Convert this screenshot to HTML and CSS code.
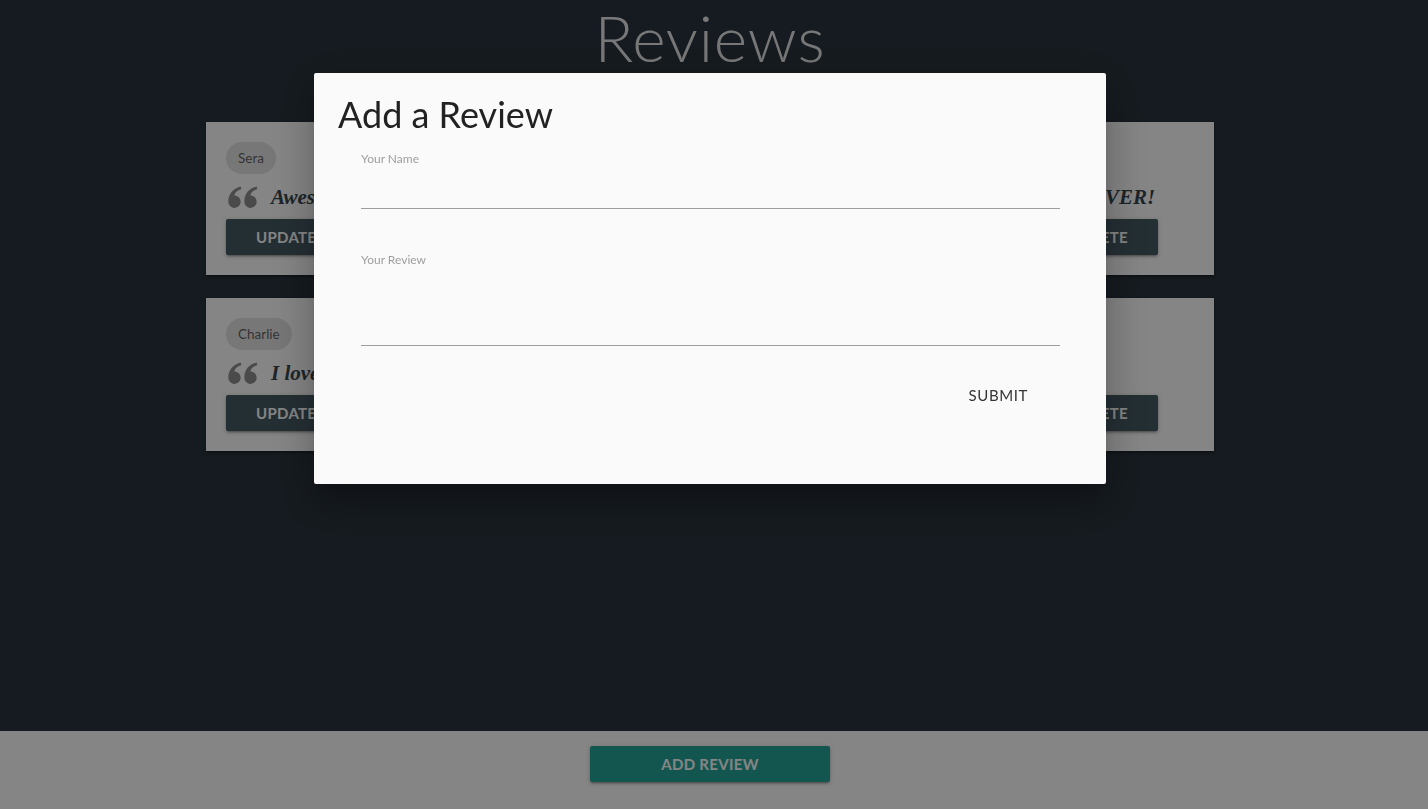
FILE: index.html
```html
<!DOCTYPE html>
<html lang="en">
<head>
<meta charset="utf-8">
<title>Reviews</title>
<link rel="stylesheet" href="styles.css">
</head>
<body>
<div class="page">
  <main class="main">
    <h1 class="page-title">Reviews</h1>
    <section class="reviews">
      <article class="card">
        <div class="chip">Sera</div>
        <p class="quote">
          <svg class="quote-icon" viewBox="0 0 30 22" width="30" height="22" aria-hidden="true">
            <path d="M6.5 9.5a6.2 6.2 0 1 1 0 12.4A6.2 6.2 0 0 1 0.3 15.6C0.3 8 5 2.6 12.6 0.4l0.8 2.6C8.6 4.8 6.4 7.2 6.5 9.5z"/>
            <path d="M22.5 9.5a6.2 6.2 0 1 1 0 12.4A6.2 6.2 0 0 1 16.3 15.6C16.3 8 21 2.6 28.6 0.4l0.8 2.6C24.6 4.8 22.4 7.2 22.5 9.5z"/>
          </svg>
          <span class="quote-text">Awesome food, very friendly staff and the cosiest little corner table in town. Best brunch place, EVER!</span>
        </p>
        <div class="actions">
          <button class="btn btn-dark" type="button">Update</button>
          <button class="btn btn-dark" type="button">Delete</button>
        </div>
      </article>
      <article class="card">
        <div class="chip">Charlie</div>
        <p class="quote">
          <svg class="quote-icon" viewBox="0 0 30 22" width="30" height="22" aria-hidden="true">
            <path d="M6.5 9.5a6.2 6.2 0 1 1 0 12.4A6.2 6.2 0 0 1 0.3 15.6C0.3 8 5 2.6 12.6 0.4l0.8 2.6C8.6 4.8 6.4 7.2 6.5 9.5z"/>
            <path d="M22.5 9.5a6.2 6.2 0 1 1 0 12.4A6.2 6.2 0 0 1 16.3 15.6C16.3 8 21 2.6 28.6 0.4l0.8 2.6C24.6 4.8 22.4 7.2 22.5 9.5z"/>
          </svg>
          <span class="quote-text">I love the atmosphere here, I come back every week.</span>
        </p>
        <div class="actions">
          <button class="btn btn-dark" type="button">Update</button>
          <button class="btn btn-dark" type="button">Delete</button>
        </div>
      </article>
    </section>
  </main>
  <footer class="footer">
    <button class="btn btn-teal" type="button">Add Review</button>
  </footer>
</div>

<div class="overlay"></div>

<div class="modal">
  <h4 class="modal-title">Add a Review</h4>
  <form class="form">
    <div class="field">
      <label class="field-label" for="name">Your Name</label>
      <input class="field-input" id="name" type="text">
    </div>
    <div class="field field-review">
      <label class="field-label" for="review">Your Review</label>
      <textarea class="field-input field-textarea" id="review"></textarea>
    </div>
    <div class="form-actions">
      <button class="btn-flat" type="button">Submit</button>
    </div>
  </form>
</div>
</body>
</html>
```

FILE: styles.css
```css
* {
  box-sizing: border-box;
}

html, body {
  margin: 0;
  padding: 0;
}

body {
  background: #2a343e;
  font-family: "Lato", "Open Sans", sans-serif;
  color: #333;
}

.page {
  min-height: 100vh;
  display: flex;
  flex-direction: column;
}

.main {
  flex: 1;
  display: flex;
  flex-direction: column;
  align-items: center;
  padding-right: 8px;
}

.page-title {
  margin: 0 0 46px;
  font-weight: 300;
  font-size: 64px;
  line-height: 76px;
  letter-spacing: .8px;
  color: #e6e6e6;
}

.reviews {
  width: 1008px;
  display: flex;
  flex-direction: column;
  gap: 23px;
}

.card {
  background: #fff;
  padding: 20px 56px 20px 20px;
  box-shadow: 0 2px 2px 0 rgba(0,0,0,.14), 0 3px 1px -2px rgba(0,0,0,.12), 0 1px 5px 0 rgba(0,0,0,.2);
}

.chip {
  display: inline-flex;
  align-items: center;
  height: 32px;
  padding: 0 12px;
  border-radius: 16px;
  background: #e4e4e4;
  color: rgba(0,0,0,.6);
  font-size: 13.5px;
}

.quote {
  margin: 12px 0 0;
  height: 22px;
  display: flex;
  align-items: center;
  gap: 13px;
  white-space: nowrap;
  overflow: hidden;
}

.quote-icon {
  flex: none;
  margin-left: 2px;
  fill: #8e8e8e;
}

.quote-text {
  font-family: "Liberation Serif", "DejaVu Serif", serif;
  font-style: italic;
  font-weight: bold;
  font-size: 21px;
  line-height: 22px;
  color: #37474f;
}

.actions {
  margin-top: 11px;
  display: flex;
  justify-content: space-between;
}

.btn {
  border: none;
  height: 36px;
  padding: 0 30px;
  font-family: "Lato", "Open Sans", sans-serif;
  font-size: 15px;
  font-weight: 700;
  letter-spacing: .3px;
  text-transform: uppercase;
  color: #fff;
  border-radius: 2px;
  box-shadow: 0 2px 2px 0 rgba(0,0,0,.14), 0 3px 1px -2px rgba(0,0,0,.12), 0 1px 5px 0 rgba(0,0,0,.2);
}

.btn-dark {
  background: #455a64;
}

.footer {
  height: 78px;
  background: #fff;
  display: flex;
  justify-content: center;
  padding: 15px 8px 0 0;
}

.btn-teal {
  width: 240px;
  background: #26a69a;
}

.overlay {
  position: fixed;
  inset: 0;
  background: rgba(0,0,0,.48);
}

.modal {
  position: fixed;
  top: 73px;
  left: 314px;
  width: 792px;
  height: 411px;
  background: #fafafa;
  padding: 21px 24px 24px;
  border-radius: 2px;
  box-shadow: 0 24px 38px 3px rgba(0,0,0,.14), 0 9px 46px 8px rgba(0,0,0,.12), 0 11px 15px -7px rgba(0,0,0,.2);
}

.modal-title {
  margin: 0;
  font-weight: 400;
  font-size: 36px;
  line-height: 40px;
  color: #222;
}

.form {
  padding: 0 22px 0 23px;
  margin-top: 17px;
}

.field {
  display: flex;
  flex-direction: column;
}

.field-review {
  margin-top: 43px;
}

.field-label {
  font-size: 12px;
  line-height: 16px;
  color: #9e9e9e;
}

.field-input {
  height: 42px;
  border: none;
  border-bottom: 1px solid #9e9e9e;
  background: transparent;
  font-family: inherit;
  font-size: 16px;
  outline: none;
}

.field-textarea {
  height: 78px;
  resize: none;
}

.form-actions {
  margin-top: 31px;
  display: flex;
  justify-content: flex-end;
  padding-right: 16px;
}

.btn-flat {
  height: 36px;
  padding: 0 16px;
  border: none;
  background: transparent;
  font-family: "Lato", "Open Sans", sans-serif;
  font-size: 15px;
  letter-spacing: .6px;
  text-transform: uppercase;
  color: #343434;
}
```
